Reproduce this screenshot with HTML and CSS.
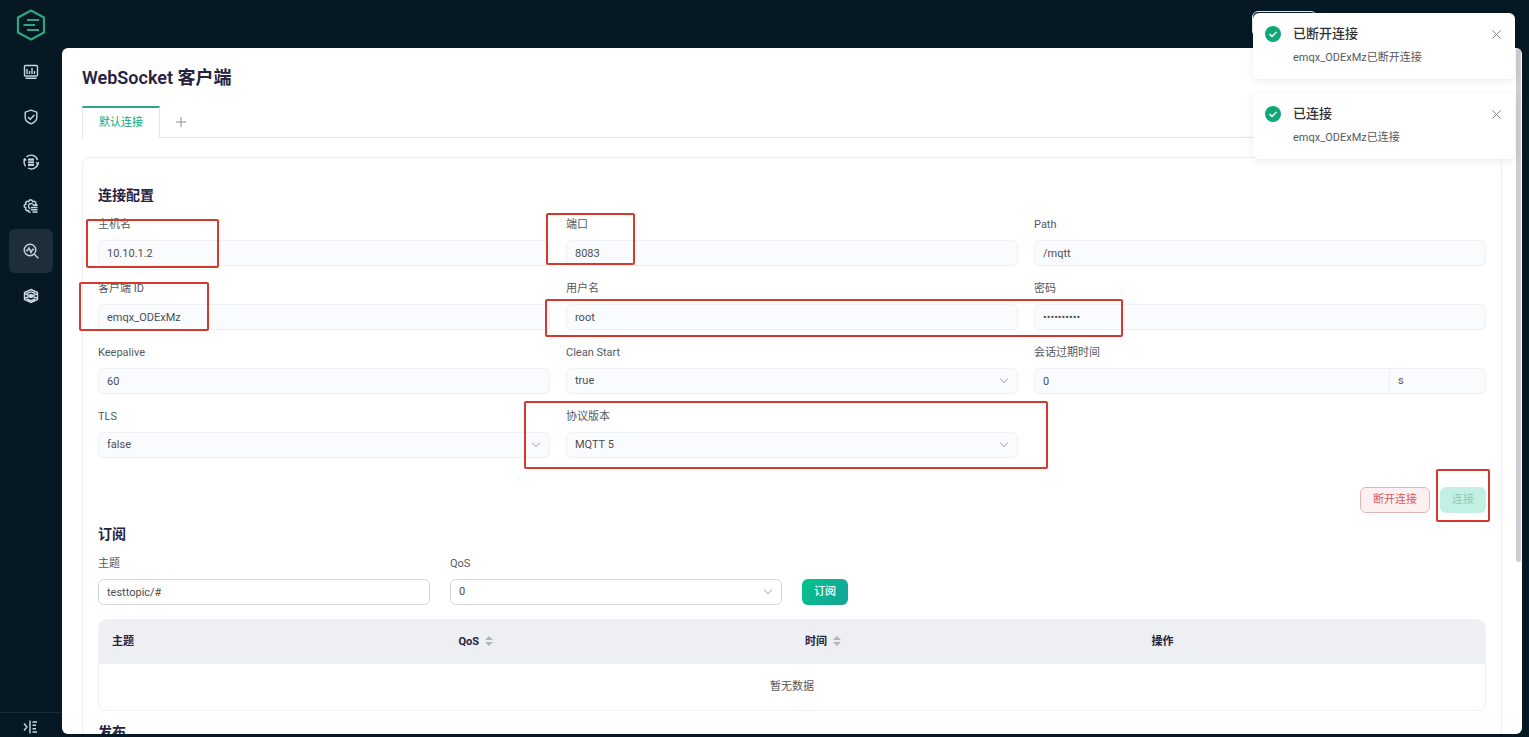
FILE: index.html
```
<!DOCTYPE html>
<html lang="zh-CN">
<head>
  <meta charset="UTF-8">
  <meta name="viewport" content="width=device-width, initial-scale=1.0">
  <title>WebSocket 客户端</title>
  <link rel="stylesheet" href="styles.css">
</head>
<body>
  <div class="app">
    <aside class="sidebar">
      <a class="logo" href="#">
        <svg width="32" height="34" viewBox="0 0 32 34" fill="none" stroke="#2fa584" stroke-width="2.2" stroke-linejoin="round">
          <path d="M16 2.5 29 9.5V24.5L16 31.5 3 24.5V9.5Z"/>
          <path d="M12 12H24M8.500 17H20M12 22H24" stroke-width="2"/>
        </svg>
      </a>
      <nav class="menu">
        <a class="menu-item" href="#">
          <svg class="icon" viewBox="0 0 16 16"><rect x="1.500" y="1.500" width="13" height="10.500" rx="1"/><path d="M4 10V5M6.500 10V7M9 10V4M11.500 10V7M2.500 14.300H13.500"/></svg>
        </a>
        <a class="menu-item" href="#">
          <svg class="icon" viewBox="0 0 16 16"><path d="M8 1.200 13.800 3.200V8.500C13.800 11.500 11 13.700 8 14.800 5 13.700 2.200 11.500 2.200 8.500V3.200Z"/><path d="M5 8 7.300 10.200 11.300 6"/></svg>
        </a>
        <a class="menu-item" href="#">
          <svg class="icon" viewBox="0 0 16 16"><path d="M3.500 2.800A6.800 6.800 0 0 1 14.500 6M15 9.500A6.800 6.800 0 0 1 5 14M2.500 12.300A6.800 6.800 0 0 1 1.700 5.500M13 8.500 15 9.800 15.500 7.800M.5 6.500 1.700 4.800 3.200 6.500"/><path class="solid" d="M5 4.500H11V12H5Z"/><path class="cut" d="M5 7H11M5 9.500H11"/></svg>
        </a>
        <a class="menu-item" href="#">
          <svg class="icon" viewBox="0 0 16 16"><path d="M7.500 14.300 6 14.200 5.600 12.500 3.900 12.800 2.500 11.500 3 9.800 1.300 8.800V7L3 6.300 2.500 4.500 3.900 3.200 5.600 3.700 6.500 2H8.700L9.600 3.700 11.500 3.200 12.800 4.500 12.500 6.200 14.300 7"/><path d="M7.500 10.500A2.500 2.500 0 1 1 10.300 7M8 9.500H14.500M8 11.700H14.500M9.500 14H14.500M10 7.300H14.500"/></svg>
        </a>
        <a class="menu-item active" href="#">
          <svg class="icon" viewBox="0 0 16 16"><circle cx="7" cy="7" r="5.800"/><path d="M11.300 11.300 15.300 15.200M3 7.500H4.500L6 5 8 9.500 9.500 6.500H11"/></svg>
        </a>
        <a class="menu-item" href="#">
          <svg class="icon" viewBox="0 0 16 16"><path d="M8 1.500 14.500 4.500V11.500L8 14.500 1.500 11.500V4.500ZM1.500 5.500 8 8.500 14.500 5.500M1.500 10.500 8 7.500 14.500 10.500M4 5.500 8 3.700 12 5.500M4 11 8 12.700 12 11"/><circle cx="8" cy="8" r="1.500"/></svg>
        </a>
      </nav>
      <button class="collapse" type="button">
        <svg class="icon" viewBox="0 0 16 16"><path d="M1 4.500 4 8 1 11.500M7 1.500V14.500M9.500 3H14M9.500 6.300H13M9.500 9.700H13M9.500 13H14"/></svg>
      </button>
    </aside>

    <div class="page">
      <header class="topbar"><span class="topbar-box"></span></header>

      <main class="main">
        <h1>WebSocket 客户端</h1>
        <div class="tabs">
          <button class="tab" type="button">默认连接</button>
          <button class="tab-add" type="button">
            <svg width="10" height="10" viewBox="0 0 10 10" fill="none" stroke="#8a8d92"><path d="M5 0V10M0 5H10"/></svg>
          </button>
        </div>

        <section class="card">
          <h2>连接配置</h2>
          <form class="config">
            <div class="field"><label for="host">主机名</label><input id="host" type="text" value="10.10.1.2" disabled></div>
            <div class="field"><label for="port">端口</label><input id="port" type="text" value="8083" disabled></div>
            <div class="field"><label for="path">Path</label><input id="path" type="text" value="/mqtt" disabled></div>
            <div class="field"><label for="client">客户端 ID</label><input id="client" type="text" value="emqx_ODExMz" disabled></div>
            <div class="field"><label for="user">用户名</label><input id="user" type="text" value="root" disabled></div>
            <div class="field"><label for="pass">密码</label><input id="pass" type="password" value="0123456789" disabled></div>
            <div class="field"><label for="keepalive">Keepalive</label><input id="keepalive" type="text" value="60" disabled></div>
            <div class="field"><label for="clean">Clean Start</label><div class="select"><select id="clean" disabled><option>true</option></select></div></div>
            <div class="field">
              <label for="expiry">会话过期时间</label>
              <div class="input-group"><input id="expiry" type="text" value="0" disabled><span class="unit">s</span></div>
            </div>
            <div class="field"><label for="tls">TLS</label><div class="select"><select id="tls" disabled><option>false</option></select></div></div>
            <div class="field"><label for="version">协议版本</label><div class="select"><select id="version" disabled><option>MQTT 5</option></select></div></div>
          </form>
          <div class="actions">
            <button class="btn btn-danger" type="button">断开连接</button>
            <button class="btn btn-primary" type="button" disabled>连接</button>
          </div>

          <h2>订阅</h2>
          <form class="subscribe">
            <div class="field"><label for="topic">主题</label><input id="topic" type="text" value="testtopic/#"></div>
            <div class="field"><label for="qos">QoS</label><div class="select"><select id="qos"><option>0</option></select></div></div>
            <div><button class="btn btn-primary" type="button">订阅</button></div>
          </form>
          <div class="table-wrap">
            <table>
              <thead>
                <tr>
                  <th>主题</th>
                  <th>QoS <svg class="sort" viewBox="0 0 8 10"><path d="M4 0 8 4H0ZM4 10 0 6H8Z"/></svg></th>
                  <th>时间 <svg class="sort" viewBox="0 0 8 10"><path d="M4 0 8 4H0ZM4 10 0 6H8Z"/></svg></th>
                  <th>操作</th>
                </tr>
              </thead>
              <tbody>
                <tr><td colspan="4">暂无数据</td></tr>
              </tbody>
            </table>
          </div>

          <h2>发布</h2>
        </section>
        <span class="scroll-thumb"></span>
      </main>
    </div>
  </div>

  <!-- 标注框 -->
  <div class="mark mark-host"></div>
  <div class="mark mark-port"></div>
  <div class="mark mark-client"></div>
  <div class="mark mark-login"></div>
  <div class="mark mark-version"></div>
  <div class="mark mark-connect"></div>

  <!-- 通知 -->
  <div class="notices">
    <div class="notice">
      <svg class="notice-icon" viewBox="0 0 16 16"><circle cx="8" cy="8" r="8" fill="#11a877"/><path d="M4.500 8 7 10.500 11.500 6" fill="none" stroke="#fff" stroke-width="1.400"/></svg>
      <div class="notice-body">
        <h3>已断开连接</h3>
        <p>emqx_ODExMz已断开连接</p>
      </div>
      <button class="close" type="button"><svg width="9" height="9" viewBox="0 0 9 9" stroke="#85888d"><path d="M.5.5 8.500 8.500M8.500.5.5 8.500"/></svg></button>
    </div>
    <div class="notice">
      <svg class="notice-icon" viewBox="0 0 16 16"><circle cx="8" cy="8" r="8" fill="#11a877"/><path d="M4.500 8 7 10.500 11.500 6" fill="none" stroke="#fff" stroke-width="1.400"/></svg>
      <div class="notice-body">
        <h3>已连接</h3>
        <p>emqx_ODExMz已连接</p>
      </div>
      <button class="close" type="button"><svg width="9" height="9" viewBox="0 0 9 9" stroke="#85888d"><path d="M.5.5 8.500 8.500M8.500.5.5 8.500"/></svg></button>
    </div>
  </div>
</body>
</html>
```
FILE: styles.css
```
* {
  box-sizing: border-box;
}
body {
  margin: 0;
  font-family: Roboto, "Noto Sans CJK SC", sans-serif;
  font-size: 11px;
  line-height: 16px;
  color: #55585e;
  background: #051824;
}
h1, h2, h3, p {
  margin: 0;
}
button, input, select {
  font: inherit;
  color: inherit;
}
button {
  padding: 0;
  border: none;
  background: none;
  cursor: pointer;
}
.app {
  display: flex;
  height: 100vh;
  overflow: hidden;
}

/* 侧边栏 */
.sidebar {
  display: flex;
  flex-direction: column;
  flex: none;
  width: 62px;
}
.logo {
  display: flex;
  justify-content: center;
  height: 50px;
  padding-top: 8px;
}
.menu {
  display: grid;
  grid-auto-rows: 1fr;
  height: 268px;
  padding: 0 9px;
}
.menu-item {
  display: flex;
  align-items: center;
  justify-content: center;
  border-radius: 6px;
}
.menu-item.active {
  background: #1e2e39;
}
.icon {
  width: 16px;
  height: 16px;
  fill: none;
  stroke: #c9d6de;
  stroke-width: 1.4;
}
.icon .solid {
  fill: #c9d6de;
  stroke: none;
}
.icon .cut {
  stroke: #051824;
  stroke-width: 0.7;
}
.collapse {
  display: flex;
  align-items: center;
  justify-content: center;
  height: 25px;
  margin-top: auto;
  padding-top: 4px;
  border-top: 1px solid #1c2c37;
}

/* 页面主体 */
.page {
  display: flex;
  flex-direction: column;
  flex: 1;
  min-width: 0;
  padding: 0 7px 3px 0;
}
.topbar {
  display: flex;
  justify-content: flex-end;
  flex: none;
  height: 48px;
  padding: 11px 205px 0 0;
}
.topbar-box {
  width: 65px;
  height: 26px;
  border: 1px solid #e5eaee;
  border-radius: 6px;
}
.main {
  position: relative;
  flex: 1;
  min-height: 0;
  padding: 18px 20px 0;
  overflow: hidden;
  background: #fff;
  border-radius: 6px;
}
.scroll-thumb {
  position: absolute;
  top: 0;
  right: 1px;
  width: 5px;
  height: 514px;
  background: #cdced3;
  border-radius: 3px;
}
h1 {
  font-size: 18px;
  line-height: 24px;
  font-weight: 600;
  color: #27233f;
}
h2 {
  font-size: 14px;
  line-height: 20px;
  font-weight: 700;
  color: #27233f;
}
.tabs {
  display: flex;
  height: 32px;
  margin: 16px 0 19px;
  border-bottom: 1px solid #e3e5e9;
}
.tab {
  height: 32px;
  padding: 0 16px;
  color: #11a877;
  background: #fff;
  border: solid #e3e5e9;
  border-width: 0 1px;
  border-top: 2px solid #2fa584;
}
.tab-add {
  display: flex;
  align-items: center;
  width: 42px;
  padding-left: 16px;
}
.card {
  height: 700px;
  padding: 27px 15px 0;
  border: 1px solid #eceef1;
  border-radius: 8px;
}

/* 表单 */
.config {
  display: grid;
  grid-template-columns: repeat(3, 1fr);
  gap: 15px 16px;
  margin-top: 12px;
}
.field {
  display: flex;
  flex-direction: column;
  gap: 7px;
  min-width: 0;
}
.field input, .field select {
  display: block;
  width: 100%;
  height: 26px;
  padding: 0 8px;
  color: #4b4e54;
  background: #fff;
  border: 1px solid #d3d5da;
  border-radius: 6px;
  appearance: none;
  opacity: 1;
}
.field input:disabled, .field select:disabled {
  background: #fafbfd;
  border-color: #eef0f5;
}
.select {
  position: relative;
}
.select::after {
  content: "";
  position: absolute;
  top: 8px;
  right: 11px;
  width: 5px;
  height: 5px;
  border: solid #b4b8bd;
  border-width: 0 1px 1px 0;
  transform: rotate(45deg);
}
.input-group {
  display: flex;
}
.input-group input {
  flex: 1;
  min-width: 0;
  border-radius: 6px 0 0 6px;
}
.unit {
  width: 96px;
  padding: 4px 8px;
  background: #fafbfd;
  border: 1px solid #eef0f5;
  border-left: none;
  border-radius: 0 6px 6px 0;
}
.actions {
  display: flex;
  justify-content: flex-end;
  gap: 10px;
  margin: 29px 0 11px;
}
.btn {
  height: 26px;
  padding: 0 12px;
  border-radius: 6px;
}
.btn-danger {
  color: #d9575c;
  background: #fdf0f0;
  border: 1px solid #e3b5b5;
}
.btn-primary {
  color: #fff;
  font-weight: 500;
  background: linear-gradient(125deg, #04c48b, #16a299);
}
.btn-primary:disabled {
  color: #8cc9ba;
  font-weight: 400;
  background: #c2f1e4;
}
.subscribe {
  display: grid;
  grid-template-columns: repeat(4, 1fr);
  align-items: end;
  gap: 20px;
  margin: 12px 0 14px;
}

/* 表格 */
.table-wrap {
  margin-bottom: 11px;
  overflow: hidden;
  border: 1px solid #f0f1f4;
  border-radius: 8px;
}
table {
  width: 100%;
  table-layout: fixed;
  border-collapse: collapse;
}
th {
  height: 44px;
  padding: 0 13px;
  text-align: left;
  font-weight: 700;
  color: #27233f;
  background: #eeeff2;
}
td {
  height: 46px;
  padding: 0;
  text-align: center;
}
.sort {
  width: 8px;
  height: 10px;
  margin-left: 3px;
  vertical-align: -1px;
  fill: #b3b5bc;
}

/* 标注框 */
.mark {
  position: absolute;
  border: 2px solid #d5392e;
  border-radius: 2px;
  pointer-events: none;
}
.mark-host {
  top: 219px;
  left: 86px;
  width: 133px;
  height: 49px;
}
.mark-port {
  top: 213px;
  left: 546px;
  width: 89px;
  height: 52px;
}
.mark-client {
  top: 282px;
  left: 79px;
  width: 130px;
  height: 49px;
}
.mark-login {
  top: 299px;
  left: 545px;
  width: 578px;
  height: 38px;
}
.mark-version {
  top: 401px;
  left: 524px;
  width: 524px;
  height: 68px;
}
.mark-connect {
  top: 469px;
  right: 39px;
  width: 54px;
  height: 53px;
}

/* 通知 */
.notices {
  position: absolute;
  top: 13px;
  right: 14px;
  display: grid;
  gap: 14px;
  width: 262px;
}
.notice {
  display: flex;
  align-items: flex-start;
  gap: 12px;
  height: 66px;
  padding: 12px 14px 0 12px;
  background: #fff;
  border-radius: 6px;
  box-shadow: 0 2px 10px rgba(0, 0, 0, 0.08);
}
.notice-icon {
  width: 16px;
  height: 16px;
  margin-top: 1px;
}
.notice-body {
  flex: 1;
}
.notice h3 {
  font-size: 13px;
  line-height: 18px;
  font-weight: 500;
  color: #303238;
}
.notice p {
  margin-top: 7px;
}
.close {
  display: flex;
  padding-top: 5px;
}
```
